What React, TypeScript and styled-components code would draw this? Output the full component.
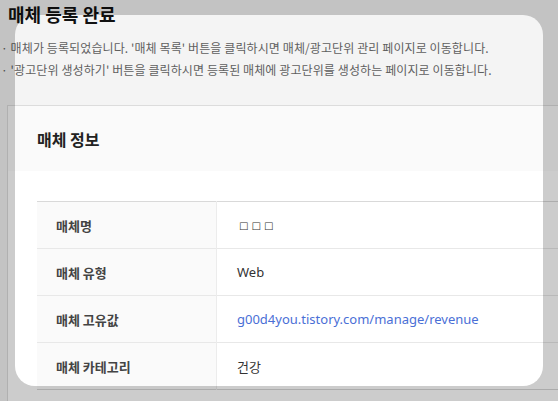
import React from 'react';
import styled, { createGlobalStyle } from 'styled-components';

const GlobalStyle = createGlobalStyle`
  html, body {
    margin: 0;
    padding: 0;
    background: #f4f4f4;
    overflow: hidden;
  }
  body {
    font-family: 'Noto Sans', 'Noto Sans CJK KR', sans-serif;
    color: #333;
  }
`;

interface InfoRow {
  label: string;
  value: string;
  kind?: 'link' | 'tofu';
}

const rows: InfoRow[] = [
  { label: '매체명', value: '□□□', kind: 'tofu' },
  { label: '매체 유형', value: 'Web' },
  { label: '매체 고유값', value: 'g00d4you.tistory.com/manage/revenue', kind: 'link' },
  { label: '매체 카테고리', value: '건강' },
];

const Page = styled.div`
  position: relative;
  width: 100%;
  height: 401px;
  overflow: hidden;
`;

const Title = styled.h1`
  margin: 0;
  padding: 3px 8px 0;
  font-family: 'Noto Sans CJK KR', sans-serif;
  font-size: 18px;
  line-height: 22px;
  font-weight: 700;
  color: #111;
`;

const NoticeList = styled.ul`
  list-style: none;
  margin: 12px 0 0;
  padding: 0 0 0 1px;
`;

const Notice = styled.li`
  font-family: 'Noto Sans CJK KR', sans-serif;
  font-size: 12px;
  line-height: 22px;
  letter-spacing: 0.1px;
  color: #5f5f5f;
  white-space: nowrap;
`;

const Card = styled.section`
  margin: 24px 0 0 7px;
  width: 720px;
  border: 1px solid #dcdcdc;
  background: #fff;
  height: 400px;
`;

const CardHeader = styled.header`
  height: 65px;
  display: flex;
  align-items: center;
  padding-left: 29px;
  background: #fafafa;
  font-family: 'Noto Sans CJK KR', sans-serif;
  font-size: 16px;
  font-weight: 700;
  color: #222;
`;

const CardBody = styled.div`
  padding: 30px 0 0 29px;
`;

const Table = styled.table`
  width: 100%;
  border-collapse: collapse;
  border-top: 1px solid #d9d9d9;
`;

const Row = styled.tr<{ $last?: boolean }>`
  height: 47px;
  border-bottom: 1px solid ${(p) => (p.$last ? '#d6d6d6' : '#e8e8e8')};
`;

const Label = styled.th`
  width: 160px;
  padding: 0 0 0 19px;
  text-align: left;
  background: #fafafa;
  border-right: 1px solid #ececec;
  font-family: 'Noto Sans CJK KR', sans-serif;
  font-size: 13px;
  font-weight: 700;
  color: #444;
`;

const Value = styled.td<{ $kind?: 'link' | 'tofu' }>`
  padding: 0 0 0 ${(p) => (p.$kind === 'tofu' ? '22px' : '20px')};
  font-family: ${(p) =>
    p.$kind === 'tofu' ? "'DejaVu Sans', sans-serif" : "'Noto Sans', 'Noto Sans CJK KR', sans-serif"};
  font-size: ${(p) => (p.$kind === 'tofu' ? '10px' : '13px')};
  letter-spacing: ${(p) => (p.$kind === 'tofu' ? '3px' : 'normal')};
  color: ${(p) => (p.$kind === 'link' ? '#4a6fd6' : '#333')};
`;

// dim mask with a rounded cutout over the page
const Spotlight = styled.div`
  position: absolute;
  left: 15px;
  top: 15px;
  width: 528px;
  height: 371px;
  border-radius: 20px;
  box-shadow: 0 0 0 1200px rgba(0, 0, 0, 0.2);
  pointer-events: none;
`;

export default function App() {
  return (
    <Page>
      <GlobalStyle />
      <Title>매체 등록 완료</Title>
      <NoticeList>
        <Notice>· 매체가 등록되었습니다. '매체 목록' 버튼을 클릭하시면 매체/광고단위 관리 페이지로 이동합니다.</Notice>
        <Notice>· '광고단위 생성하기' 버튼을 클릭하시면 등록된 매체에 광고단위를 생성하는 페이지로 이동합니다.</Notice>
      </NoticeList>
      <Card>
        <CardHeader>매체 정보</CardHeader>
        <CardBody>
          <Table>
            <tbody>
              {rows.map((r, i) => (
                <Row key={r.label} $last={i === rows.length - 1}>
                  <Label>{r.label}</Label>
                  <Value $kind={r.kind}>{r.value}</Value>
                </Row>
              ))}
            </tbody>
          </Table>
        </CardBody>
      </Card>
      <Spotlight />
    </Page>
  );
}
